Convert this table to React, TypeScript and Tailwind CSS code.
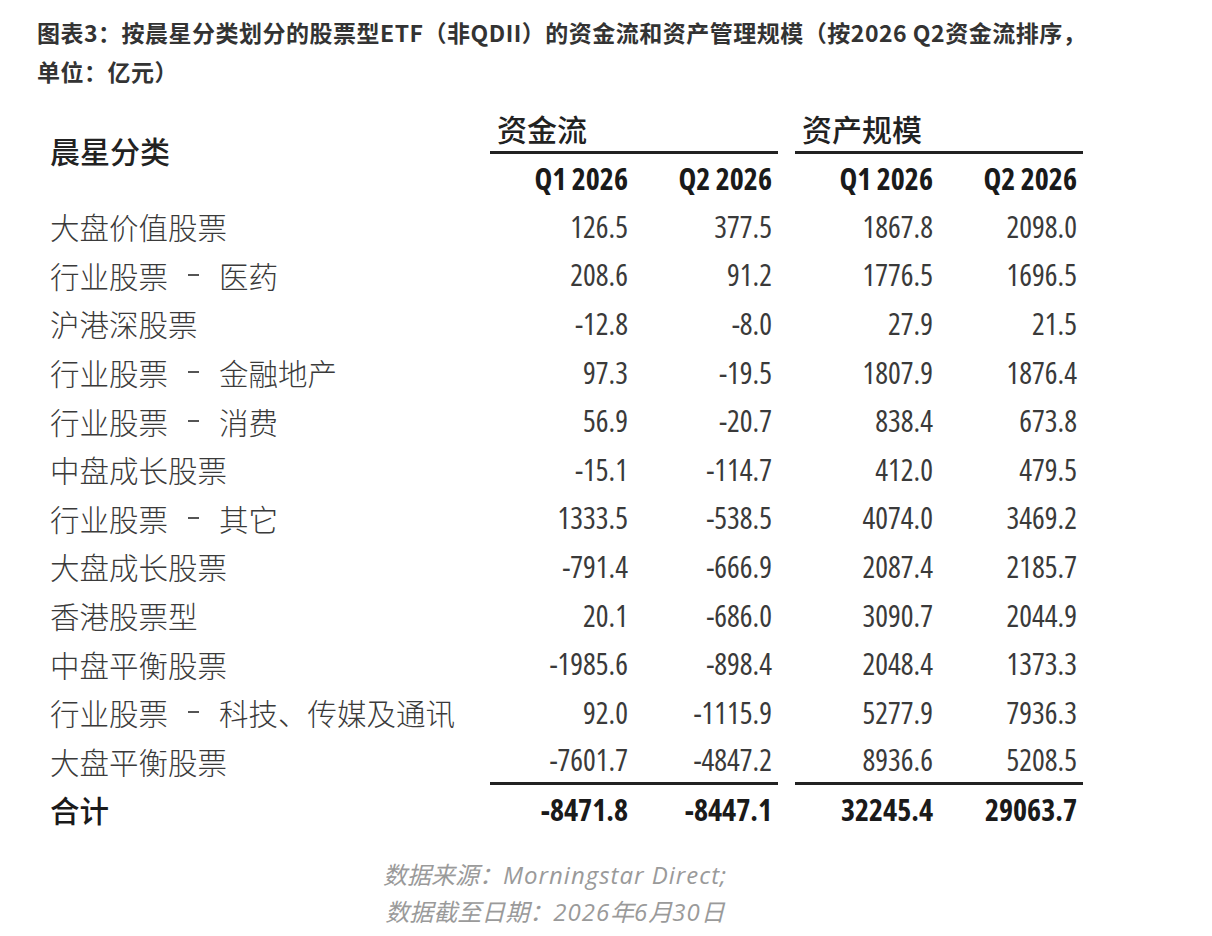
import React from 'react';

const rows: [string, string, string, string, string][] = [
  ['大盘价值股票', '126.5', '377.5', '1867.8', '2098.0'],
  ['行业股票|医药', '208.6', '91.2', '1776.5', '1696.5'],
  ['沪港深股票', '-12.8', '-8.0', '27.9', '21.5'],
  ['行业股票|金融地产', '97.3', '-19.5', '1807.9', '1876.4'],
  ['行业股票|消费', '56.9', '-20.7', '838.4', '673.8'],
  ['中盘成长股票', '-15.1', '-114.7', '412.0', '479.5'],
  ['行业股票|其它', '1333.5', '-538.5', '4074.0', '3469.2'],
  ['大盘成长股票', '-791.4', '-666.9', '2087.4', '2185.7'],
  ['香港股票型', '20.1', '-686.0', '3090.7', '2044.9'],
  ['中盘平衡股票', '-1985.6', '-898.4', '2048.4', '1373.3'],
  ['行业股票|科技、传媒及通讯', '92.0', '-1115.9', '5277.9', '7936.3'],
  ['大盘平衡股票', '-7601.7', '-4847.2', '8936.6', '5208.5'],
];

const cjk = "font-['Noto_Sans_CJK_SC',sans-serif]";
const num = "font-['Open_Sans','Noto_Sans_CJK_SC',sans-serif] [font-stretch:75%]";
const latin = "font-['Open_Sans'] tracking-[1px]";

function NumCell({ v, bold = false, className = '' }: { v: string; bold?: boolean; className?: string }) {
  return (
    <div className={`${num} flex items-center justify-end pr-[6px] text-[30px] ${bold ? 'font-bold text-[#1a1a1a]' : 'text-[#3a3a3a]'} ${className}`}>
      {v}
    </div>
  );
}

function Label({ text }: { text: string }) {
  const [a, b] = text.split('|');
  return (
    <div className={`${cjk} h-[48.6px] flex items-center text-[29.5px] font-light text-[#3a3a3a] whitespace-nowrap`}>
      {a}
      {b && (
        <>
          <span className="mx-[20px] inline-block w-[11px] h-[2px] bg-[#555]" />
          {b}
        </>
      )}
    </div>
  );
}

export default function App() {
  return (
    <div className="w-[1212px] h-[936px] bg-white pt-[13px] pl-[37px]">
      <p className={`${cjk} text-[23px] leading-[39px] font-bold tracking-[0.5px] text-[#333] whitespace-nowrap`}>
        图表3：按晨星分类划分的股票型ETF（非QDII）的资金流和资产管理规模（按2026 Q2资金流排序，
        <br />
        单位：亿元）
      </p>

      <div className="ml-[13px] mt-[17px] grid grid-cols-[440px_144px_144px_17px_144px_144px]">
        {/* header */}
        <div className={`${cjk} row-span-2 flex items-center pb-[10px] text-[30px] font-medium text-[#222]`}>晨星分类</div>
        <div className={`${cjk} col-span-2 h-[46px] flex items-end pl-[7px] pb-[8px] border-b-[3px] border-[#222] text-[30px] font-medium text-[#222] leading-none`}>资金流</div>
        <div />
        <div className={`${cjk} col-span-2 h-[46px] flex items-end pl-[7px] pb-[8px] border-b-[3px] border-[#222] text-[30px] font-medium text-[#222] leading-none`}>资产规模</div>
        <NumCell v="Q1 2026" bold className="h-[48px]" />
        <NumCell v="Q2 2026" bold className="h-[48px]" />
        <div />
        <NumCell v="Q1 2026" bold className="h-[48px]" />
        <NumCell v="Q2 2026" bold className="h-[48px]" />

        {/* body */}
        {rows.map((r, i) => {
          const line = i === rows.length - 1 ? 'border-b-[3px] border-[#222]' : '';
          return (
            <React.Fragment key={r[0]}>
              <Label text={r[0]} />
              <NumCell v={r[1]} className={line} />
              <NumCell v={r[2]} className={line} />
              <div />
              <NumCell v={r[3]} className={line} />
              <NumCell v={r[4]} className={line} />
            </React.Fragment>
          );
        })}

        {/* total */}
        <div className={`${cjk} h-[48px] flex items-center text-[29.5px] font-medium text-[#1a1a1a]`}>合计</div>
        <NumCell v="-8471.8" bold />
        <NumCell v="-8447.1" bold />
        <div />
        <NumCell v="32245.4" bold />
        <NumCell v="29063.7" bold />
      </div>

      <div className={`${cjk} w-[1036px] mt-[23px] text-center text-[24px] leading-[36px] italic text-[#9a9a9a]`}>
        <p>数据来源：<span className={latin}>Morningstar Direct;</span></p>
        <p>数据截至日期：<span className={latin}>2026</span>年<span className={latin}>6</span>月<span className={latin}>30</span>日</p>
      </div>
    </div>
  );
}
